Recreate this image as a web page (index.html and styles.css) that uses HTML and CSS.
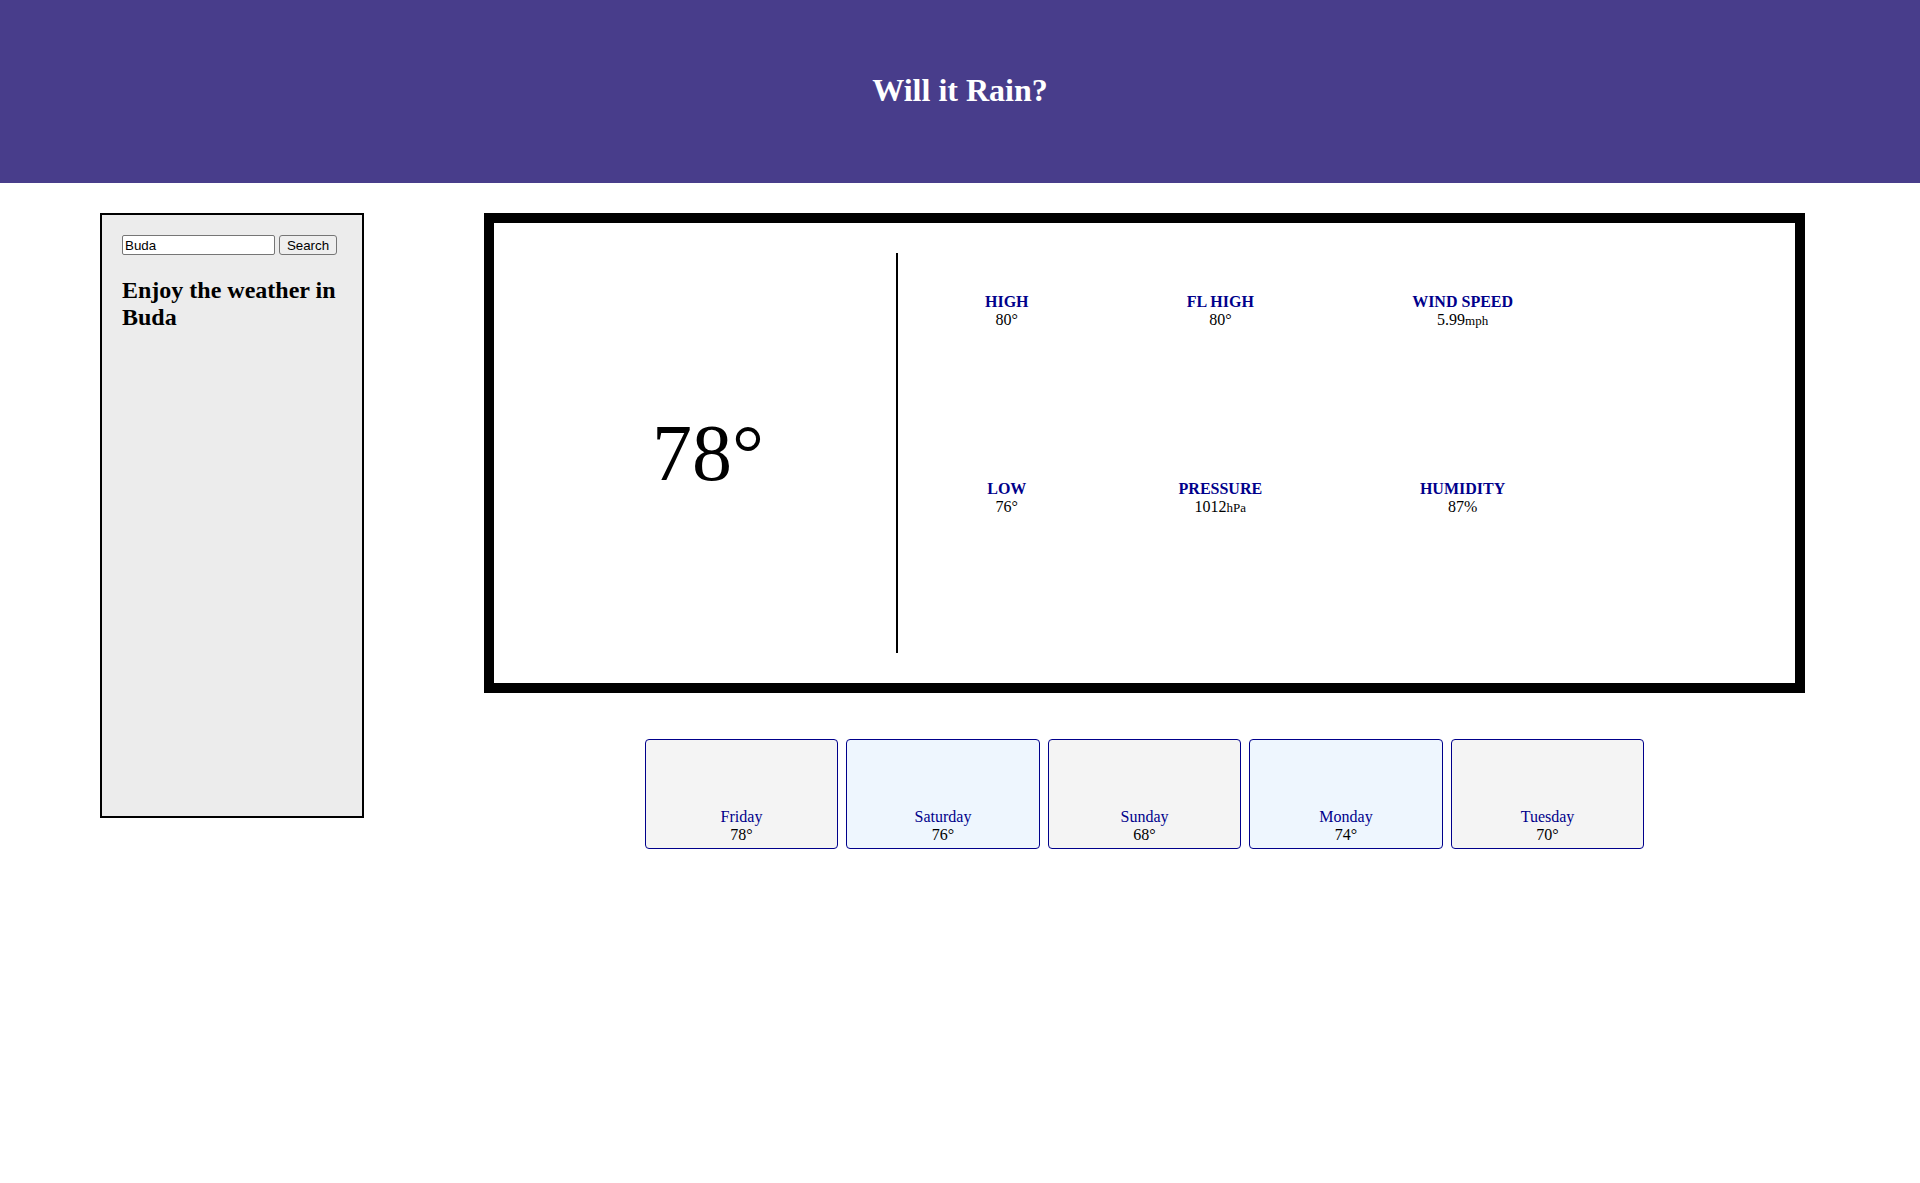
FILE: index.html
```html
<!DOCTYPE html>
<html lang="en">
<head>
<meta charset="utf-8">
<title>Will it Rain?</title>
<link rel="stylesheet" href="styles.css">
</head>
<body>
<header class="site-header">
  <h1 class="site-title">Will it Rain?</h1>
</header>
<div class="layout">
  <aside class="sidebar">
    <form class="search-form">
      <input class="search-input" type="text" value="Buda"> <button class="search-btn" type="button">Search</button>
    </form>
    <h2 class="sidebar-title">Enjoy the weather in Buda</h2>
  </aside>
  <main class="content">
    <section class="current">
      <div class="now">78°</div>
      <div class="details">
        <div class="stats">
          <div class="stat"><div class="stat-label">HIGH</div><div class="stat-value">80°</div></div>
          <div class="stat"><div class="stat-label">FL HIGH</div><div class="stat-value">80°</div></div>
          <div class="stat"><div class="stat-label">WIND SPEED</div><div class="stat-value">5.99<small>mph</small></div></div>
          <div class="stat"><div class="stat-label">LOW</div><div class="stat-value">76°</div></div>
          <div class="stat"><div class="stat-label">PRESSURE</div><div class="stat-value">1012<small>hPa</small></div></div>
          <div class="stat"><div class="stat-label">HUMIDITY</div><div class="stat-value">87%</div></div>
        </div>
      </div>
    </section>
    <section class="forecast">
      <div class="day day-odd"><div class="day-name">Friday</div><div class="day-temp">78°</div></div>
      <div class="day day-even"><div class="day-name">Saturday</div><div class="day-temp">76°</div></div>
      <div class="day day-odd"><div class="day-name">Sunday</div><div class="day-temp">68°</div></div>
      <div class="day day-even"><div class="day-name">Monday</div><div class="day-temp">74°</div></div>
      <div class="day day-odd"><div class="day-name">Tuesday</div><div class="day-temp">70°</div></div>
    </section>
  </main>
</div>
</body>
</html>
```
FILE: styles.css
```css
html, body {
  margin: 0;
  padding: 0;
  background: #fff;
  font-family: "Liberation Serif", "Times New Roman", serif;
  color: #000;
}

.site-header {
  background: #483d8b;
  height: 183px;
  box-sizing: border-box;
  padding-top: 72px;
}

.site-title {
  margin: 0;
  color: #fff;
  font-size: 32px;
  line-height: 37px;
  font-weight: bold;
  text-align: center;
}

.layout {
  display: flex;
  align-items: flex-start;
  gap: 120px;
  padding: 30px 115px 0 100px;
}

.sidebar {
  width: 264px;
  height: 605px;
  box-sizing: border-box;
  flex: none;
  border: 2px solid #000;
  background: #ececec;
  padding: 20px;
}

.search-form {
  margin: 0;
  white-space: nowrap;
}

.search-input {
  font-family: "Liberation Sans", Arial, sans-serif;
  font-size: 13.333px;
  width: 153px;
  height: 20px;
  box-sizing: border-box;
  padding: 1px 2px;
  border: 1px solid #767676;
  border-radius: 2px;
  margin: 0;
  vertical-align: top;
}

.search-btn {
  font-family: "Liberation Sans", Arial, sans-serif;
  font-size: 13.333px;
  height: 20px;
  width: 58px;
  box-sizing: border-box;
  padding: 1px 6px;
  border: 1px solid #767676;
  border-radius: 3px;
  background: #efefef;
  color: #000;
  margin: 0;
  vertical-align: top;
}

.sidebar-title {
  margin: 22px 0 20px;
  font-size: 24px;
  font-weight: bold;
}

.content {
  flex: 1;
  min-width: 0;
}

.current {
  display: flex;
  height: 480px;
  box-sizing: border-box;
  border: 10px solid #000;
  padding: 30px;
}

.now {
  width: 374px;
  box-sizing: border-box;
  flex: none;
  border-right: 2px solid #000;
  display: flex;
  align-items: center;
  justify-content: center;
  padding-right: 4px;
  font-size: 80px;
}

.details {
  flex: 1;
  padding-left: 12px;
}

.stats {
  display: grid;
  grid-template-columns: repeat(3, auto);
  justify-content: start;
  row-gap: 151px;
  margin-top: 40px;
}

.stat {
  padding: 0 75px;
  text-align: center;
  font-size: 16px;
}

.stat-label {
  font-weight: bold;
  color: #00008b;
}

.stat-value small {
  font-size: 13px;
}

.forecast {
  display: flex;
  justify-content: center;
  gap: 8px;
  margin-top: 46px;
}

.day {
  width: 193.5px;
  height: 110px;
  box-sizing: border-box;
  border: 1px solid #00008b;
  border-radius: 4px;
  display: flex;
  flex-direction: column;
  justify-content: flex-end;
  align-items: center;
  padding-bottom: 4px;
  font-size: 16px;
}

.day-odd {
  background: #f4f4f4;
}

.day-even {
  background: #eef6fe;
}

.day-name {
  color: #00008b;
}
```
